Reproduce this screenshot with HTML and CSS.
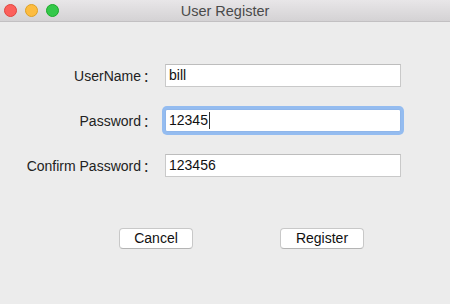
FILE: index.html
```html
<!DOCTYPE html>
<html>
<head>
<meta charset="utf-8">
<link rel="stylesheet" href="styles.css">
</head>
<body>
<div class="window">
  <div class="titlebar">
    <div class="lights">
      <span class="light red"></span>
      <span class="light yellow"></span>
      <span class="light green"></span>
    </div>
    <div class="title">User Register</div>
  </div>
  <div class="content">
    <div class="form">
      <div class="label">UserName<span class="colon">：</span></div>
      <div class="field">bill</div>
      <div class="label">Password<span class="colon">：</span></div>
      <div class="field focused">12345<span class="caret"></span></div>
      <div class="label">Confirm Password<span class="colon">：</span></div>
      <div class="field">123456</div>
    </div>
    <div class="buttons">
      <button class="btn cancel">Cancel</button>
      <button class="btn register">Register</button>
    </div>
  </div>
</div>
</body>
</html>
```
FILE: styles.css
```css
html, body {
  margin: 0;
  padding: 0;
  background: #ececec;
}
.window {
  width: 450px;
  height: 304px;
  background: #ececec;
  font-family: "Liberation Sans", Arial, sans-serif;
  color: #1e1e1e;
  overflow: hidden;
}
.titlebar {
  position: relative;
  height: 21px;
  border-bottom: 1px solid #c2c0c2;
  background: linear-gradient(#e8e6e8, #d4d2d4);
  display: flex;
  align-items: center;
  justify-content: center;
}
.lights {
  position: absolute;
  left: 4px;
  top: 4px;
  display: flex;
  gap: 8px;
}
.light {
  width: 11px;
  height: 11px;
  border-radius: 50%;
  display: block;
}
.red { background: #fc605c; border: 1px solid #e0443e; }
.yellow { background: #fdbc40; border: 1px solid #dea123; }
.green { background: #34c84a; border: 1px solid #1aab29; }
.title {
  font-size: 14.5px;
  color: #4a4a4a;
  line-height: 21px;
  padding-top: 1px;
}
.content {
  padding-top: 42px;
}
.form {
  display: grid;
  grid-template-columns: 155px 236px;
  column-gap: 10px;
  row-gap: 22px;
  align-items: center;
}
.label {
  text-align: right;
  font-size: 14px;
  white-space: nowrap;
  color: #222;
}
.colon {
  font-family: "Noto Sans CJK SC", sans-serif;
  font-size: 13px;
  display: inline-block;
  width: 14px;
  text-align: left;
  padding-left: 2px;
  box-sizing: border-box;
}
.field {
  box-sizing: border-box;
  height: 23px;
  background: #fff;
  border: 1px solid #c9c9c9;
  border-top-color: #bdbdbd;
  font-size: 14px;
  line-height: 21px;
  padding-left: 3px;
  color: #111;
  display: flex;
  align-items: center;
}
.field.focused {
  border-color: #8fb6ea;
  box-shadow: 0 0 0 3px #94bcf0;
  border-radius: 2px;
}
.caret {
  display: inline-block;
  width: 1px;
  height: 17px;
  background: #333;
  margin-left: 1px;
}
.buttons {
  display: flex;
  padding-top: 51px;
  padding-left: 119px;
  gap: 87px;
}
.btn {
  box-sizing: border-box;
  height: 21px;
  background: #fff;
  border: 1px solid #c8c8c8;
  border-bottom-color: #b4b4b4;
  border-radius: 4px;
  font-family: "Liberation Sans", Arial, sans-serif;
  font-size: 14px;
  color: #111;
  padding: 0;
  line-height: 19px;
}
.cancel { width: 74px; }
.register { width: 84px; }
```
